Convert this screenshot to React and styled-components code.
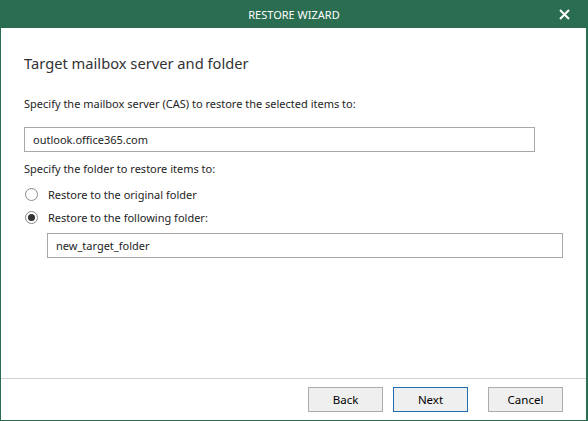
import React from 'react'
import styled, { createGlobalStyle } from 'styled-components'

const GlobalStyle = createGlobalStyle`
    html, body {
        margin: 0;
        padding: 0;
        background: #ffffff;
    }
    * {
        box-sizing: border-box;
    }
`;

const Window = styled.div`
    width: 588px;
    height: 421px;
    display: flex;
    flex-direction: column;
    background: #ffffff;
    border-left: 1px solid #2a6d50;
    border-right: 2px solid #2a6d50;
    border-bottom: 1px solid #2a6d50;
    font-family: 'Noto Sans', 'Open Sans', sans-serif;
    color: #1e1e1e;
`;

const TitleBar = styled.div`
    height: 28px;
    flex: none;
    margin: 0 -2px 0 -1px;
    background: #2a6d50;
    color: #ffffff;
    display: flex;
    align-items: center;
    justify-content: center;
    position: relative;
    font-size: 11px;
`;

const CloseButton = styled.button`
    position: absolute;
    right: 18px;
    top: 8px;
    width: 12px;
    height: 12px;
    padding: 0;
    border: none;
    background: transparent;
    display: flex;
    align-items: center;
    justify-content: center;
    cursor: pointer;
`;

const Body = styled.div`
    flex: 1;
    display: flex;
    flex-direction: column;
    padding: 25px 23px 0 23px;
`;

const Heading = styled.h1`
    margin: 0;
    font-size: 14.7px;
    line-height: 20px;
    font-weight: 400;
    color: #333333;
`;

const Label = styled.p`
    margin: ${p => p.top}px 0 0 0;
    font-size: 11px;
    line-height: 16px;
    color: #1e1e1e;
`;

const Input = styled.input`
    margin: ${p => p.top}px 0 0 ${p => p.left || 0}px;
    width: ${p => p.w}px;
    height: 25px;
    border: 1px solid #a8a8a8;
    padding: 0 8px;
    font-family: inherit;
    font-size: 11px;
    color: #1e1e1e;
    outline: none;
`;

const RadioRow = styled.label`
    margin-top: ${p => p.top}px;
    height: 16px;
    display: flex;
    align-items: center;
    gap: 10px;
    font-size: 11px;
    color: #1e1e1e;
    padding-left: 1px;
`;

const RadioCircle = styled.span`
    width: 13px;
    height: 13px;
    border-radius: 50%;
    border: 1px solid #8a8a8a;
    display: flex;
    align-items: center;
    justify-content: center;
    flex: none;
    &::after {
        content: '';
        width: 7px;
        height: 7px;
        border-radius: 50%;
        background: ${p => (p.checked ? '#333333' : 'transparent')};
    }
`;

const Footer = styled.div`
    flex: none;
    border-top: 1px solid #d0d0d0;
    padding: 8px 23px 8px 0;
    display: flex;
    justify-content: flex-end;
`;

const Button = styled.button`
    width: 75px;
    height: 25px;
    margin-left: ${p => p.gap}px;
    background: #efefef;
    border: 1px solid ${p => (p.primary ? '#1f6db3' : '#acacac')};
    font-family: inherit;
    font-size: 11.5px;
    color: #000000;
    padding: 0;
    cursor: pointer;
`;

export default function App() {
    return (
        <>
            <GlobalStyle />
            <Window>
                <TitleBar>
                    RESTORE WIZARD
                    <CloseButton aria-label="Close">
                        <svg width="11" height="11" viewBox="0 0 11 11">
                            <path d="M1 1 L10 10 M10 1 L1 10" stroke="#ffffff" strokeWidth="2" />
                        </svg>
                    </CloseButton>
                </TitleBar>
                <Body>
                    <Heading>Target mailbox server and folder</Heading>
                    <Label top={23}>Specify the mailbox server (CAS) to restore the selected items to:</Label>
                    <Input top={15} w={511} defaultValue="outlook.office365.com" />
                    <Label top={9}>Specify the folder to restore items to:</Label>
                    <RadioRow top={9}>
                        <RadioCircle />
                        Restore to the original folder
                    </RadioRow>
                    <RadioRow top={7}>
                        <RadioCircle checked />
                        Restore to the following folder:
                    </RadioRow>
                    <Input top={8} left={23} w={516} defaultValue="new_target_folder" />
                </Body>
                <Footer>
                    <Button gap={0}>Back</Button>
                    <Button gap={10} primary>Next</Button>
                    <Button gap={20}>Cancel</Button>
                </Footer>
            </Window>
        </>
    )
}
